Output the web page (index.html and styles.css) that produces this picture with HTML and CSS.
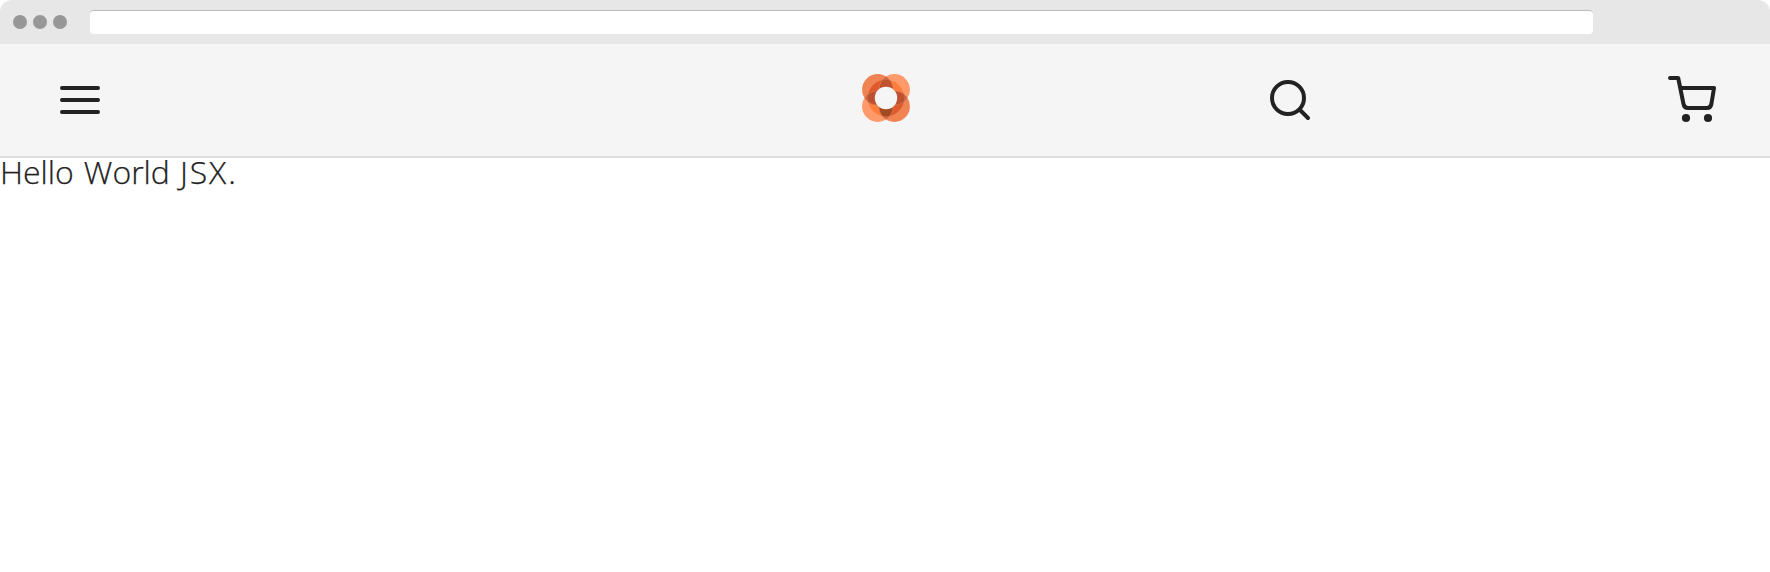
FILE: index.html
```html
<!DOCTYPE html>
<html lang="en">
<head>
<meta charset="utf-8">
<title>Hello World JSX</title>
<link rel="stylesheet" href="styles.css">
</head>
<body>
<div class="window">
  <div class="chrome">
    <span class="dot"></span><span class="dot"></span><span class="dot"></span>
    <div class="address"></div>
  </div>
  <header class="header">
    <svg class="menu" width="40" height="28" viewBox="0 0 40 28" stroke="#222" stroke-width="4" stroke-linecap="round"><path d="M2 2H38M2 14H38M2 26H38"/></svg>
    <svg class="logo" width="48" height="48" viewBox="0 0 48 48">
      <defs>
        <clipPath id="tl"><circle cx="15.6" cy="15.6" r="15.5"/></clipPath>
        <clipPath id="tr"><circle cx="32.4" cy="15.6" r="15.5"/></clipPath>
        <clipPath id="bl"><circle cx="15.6" cy="32.4" r="15.5"/></clipPath>
        <clipPath id="br"><circle cx="32.4" cy="32.4" r="15.5"/></clipPath>
        <clipPath id="ring"><circle cx="24" cy="24" r="18.3"/></clipPath>
      </defs>
      <circle cx="15.6" cy="15.6" r="15.5" fill="#f08352"/>
      <circle cx="32.4" cy="15.6" r="15.5" fill="#ff9b6b"/>
      <circle cx="15.6" cy="32.4" r="15.5" fill="#ff9b6b"/>
      <circle cx="32.4" cy="32.4" r="15.5" fill="#f08352"/>
      <circle cx="24" cy="24" r="18.3" clip-path="url(#tl)" fill="#df5a2c"/>
      <circle cx="24" cy="24" r="18.3" clip-path="url(#tr)" fill="#ff7e3e"/>
      <circle cx="24" cy="24" r="18.3" clip-path="url(#bl)" fill="#ff7e3e"/>
      <circle cx="24" cy="24" r="18.3" clip-path="url(#br)" fill="#df5a2c"/>
      <path d="M24 2.6A15.5 15.5 0 0 1 24 28.6A15.5 15.5 0 0 1 24 2.6M24 45.4A15.5 15.5 0 0 1 24 19.4A15.5 15.5 0 0 1 24 45.4M2.6 24A15.5 15.5 0 0 1 28.6 24A15.5 15.5 0 0 1 2.6 24M45.4 24A15.5 15.5 0 0 1 19.4 24A15.5 15.5 0 0 1 45.4 24" fill="#cc6a49"/>
      <g clip-path="url(#ring)" stroke="#d78a65" stroke-width=".5">
        <path d="M24 2.6A15.5 15.5 0 0 1 24 28.6A15.5 15.5 0 0 1 24 2.6" fill="#c0522f"/>
        <path d="M2.6 24A15.5 15.5 0 0 1 28.6 24A15.5 15.5 0 0 1 2.6 24" fill="#bd5132"/>
        <path d="M45.4 24A15.5 15.5 0 0 1 19.4 24A15.5 15.5 0 0 1 45.4 24" fill="#bd5132"/>
        <path d="M24 45.4A15.5 15.5 0 0 1 24 19.4A15.5 15.5 0 0 1 24 45.4" fill="#a24a20"/>
      </g>
      <circle cx="24" cy="24" r="11.2" fill="#f5f5f5"/>
    </svg>
    <svg class="search" width="42" height="42" viewBox="0 0 42 42" fill="none" stroke="#222" stroke-width="4" stroke-linecap="round"><circle cx="18" cy="18" r="16"/><path d="M29.5 29.5L38 38"/></svg>
    <svg class="cart" width="48" height="48" viewBox="0 0 48 48" fill="none" stroke="#222" stroke-width="4" stroke-linecap="round" stroke-linejoin="round"><path d="M2 3H10.2L15.5 29Q16.3 33 20 33H39Q42.6 33 43.4 29L46 13H12.3"/><g fill="#222" stroke="none"><circle cx="18" cy="43" r="4.1"/><circle cx="40" cy="43" r="4.1"/></g></svg>
  </header>
  <main class="content">Hello World <span class="wide">JSX.</span></main>
</div>
</body>
</html>
```
FILE: styles.css
```css
body { margin: 0; background: #fff; }
.window { height: 572px; overflow: hidden; border-radius: 12px 12px 0 0; }
.chrome { box-sizing: border-box; height: 44px; background: #e7e7e7; display: flex; align-items: center; padding-left: 13px; gap: 6px; }
.dot { width: 14px; height: 14px; border-radius: 50%; background: #979797; }
.address { box-sizing: border-box; width: 1503px; height: 24px; margin-left: 17px; border-top: 1px solid #bbb; border-radius: 4px; background: #fff; }
.header { box-sizing: border-box; height: 114px; background: #f5f5f5; border-bottom: 2px solid #ddd; display: flex; align-items: flex-start; }
.header svg { flex: none; }
.menu { margin: 42px 0 0 60px; }
.logo { margin: 30px 0 0 762px; }
.search { margin: 36px 0 0 360px; }
.cart { margin: 31px 0 0 356px; }
.content { font: 300 32px/28px "Open Sans", sans-serif; letter-spacing: 0; word-spacing: 1.7px; color: #222; -webkit-text-stroke: .25px #222; }
.wide { letter-spacing: 1.9px; }
```
